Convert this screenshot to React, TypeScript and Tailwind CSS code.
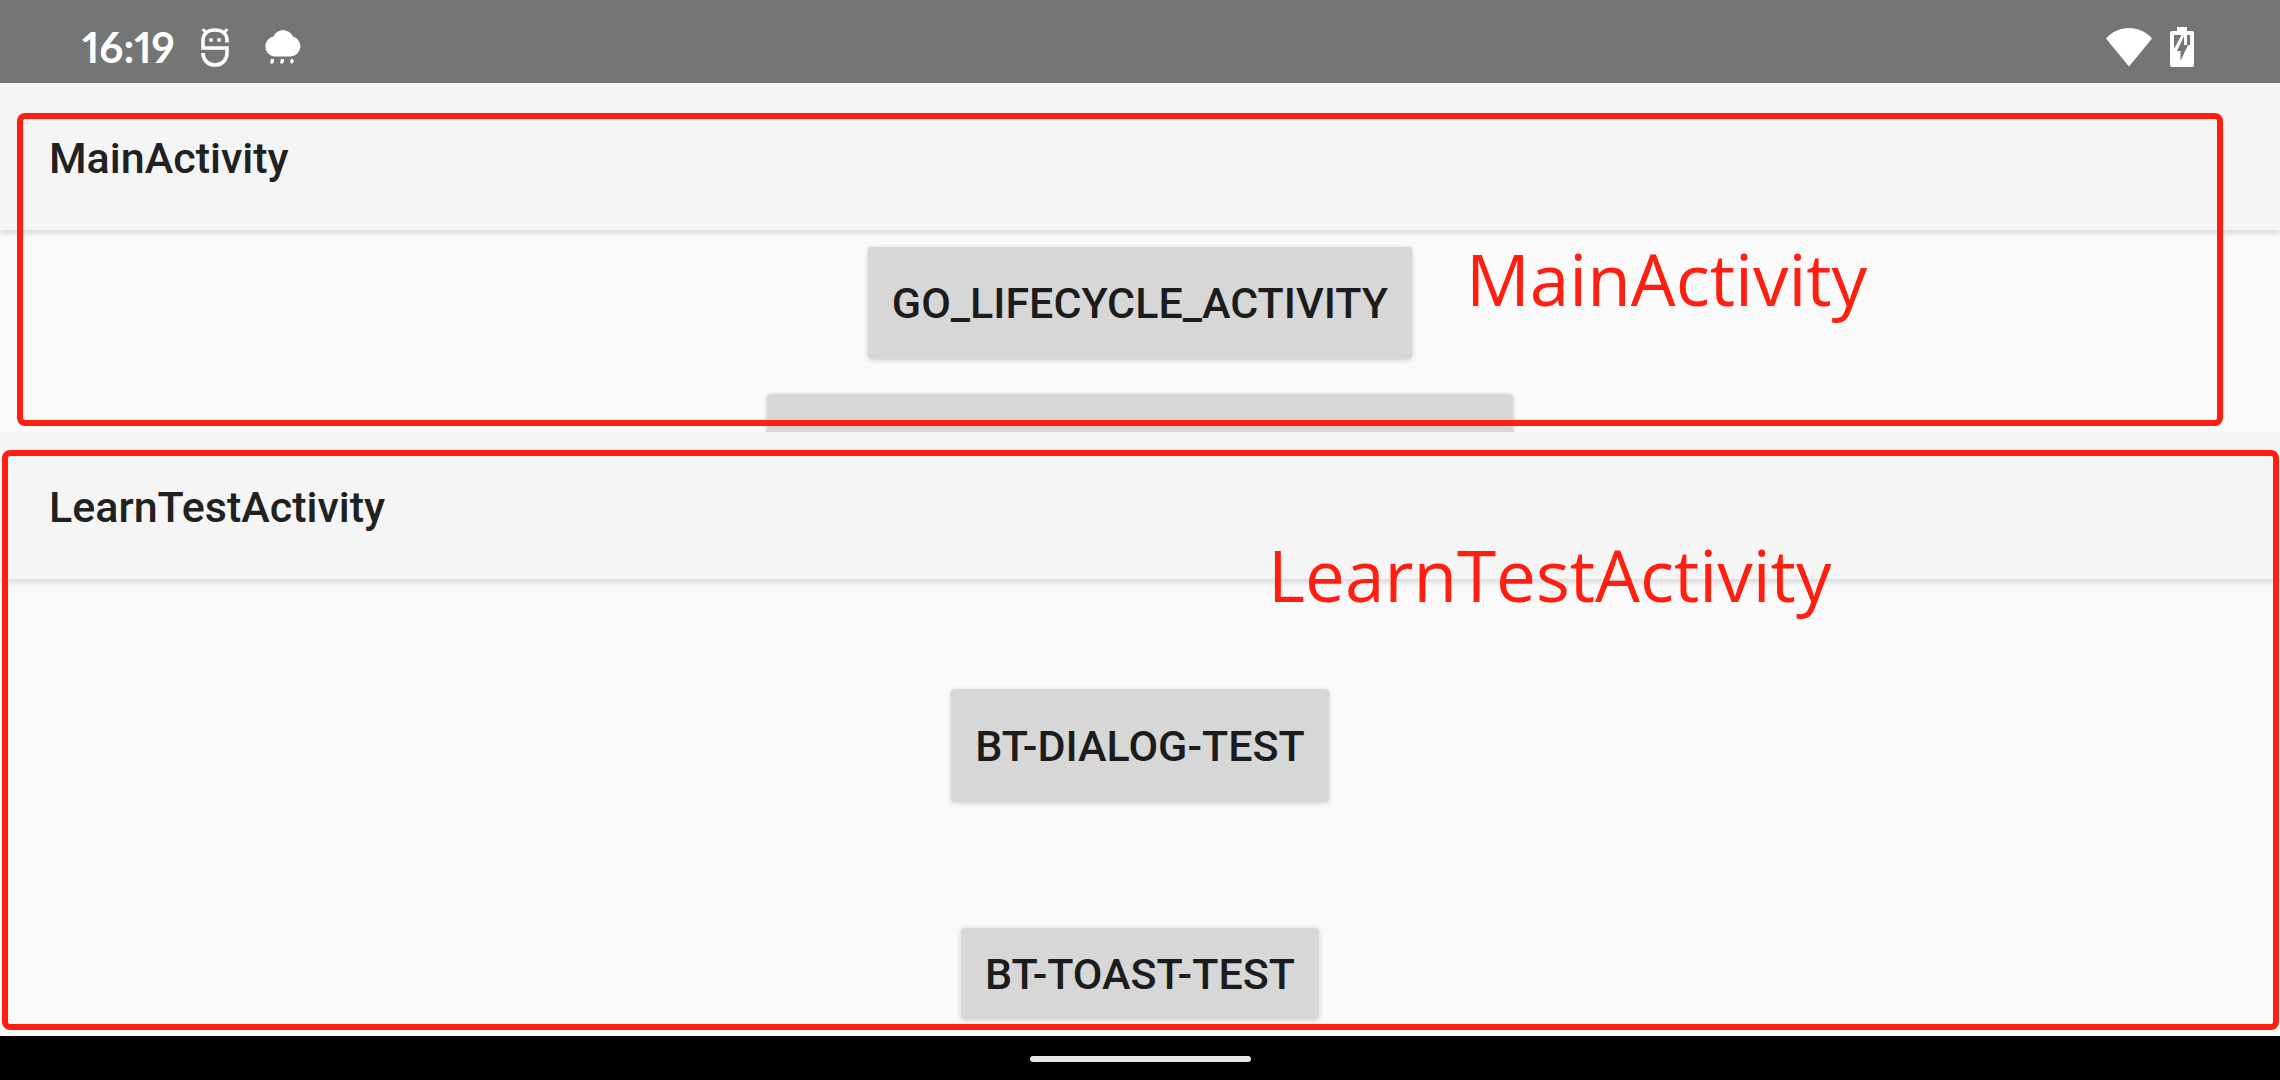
import React from "react";

const boxClass = "pointer-events-none absolute rounded-lg border-6 border-[#ff1e10]";
const labelClass =
  "pointer-events-none absolute font-['Open_Sans',sans-serif] text-[71px] leading-[98px] text-[#ff1e10]";
const buttonClass =
  "shrink-0 rounded-[4px] bg-[#d7d7d7] px-6 text-[43px] leading-[50px] font-medium text-[#1c1c1c] shadow-[0_1px_5px_rgba(0,0,0,0.2)]";

function RobotIcon() {
  return (
    <svg className="h-10 w-7" viewBox="0 0 28 40" fill="none" stroke="#fff" strokeWidth="3.6">
      <path d="M26 15.500v-2C26 7 21.500 3 14 3S2 7 2 13.500V21h24v5c0 7-5 12-12 12S2 33 2 26" />
      <path d="M2.500 3l3 3M25.500 3l-3 3" strokeLinecap="round" strokeWidth="3" />
      <circle cx="10" cy="13" r="2" fill="#fff" stroke="none" />
      <circle cx="18" cy="13" r="2" fill="#fff" stroke="none" />
    </svg>
  );
}

function RainIcon() {
  return (
    <svg className="h-9 w-[38px]" viewBox="0 0 38 36" fill="#fff">
      <path d="M10.500 7.500C14-1 26-1 30 7.500A10.200 10.200 0 0 1 27.500 27.500H10.500A10.200 10.200 0 0 1 10.500 7.500z" />
      <path d="M8 30h3v3l-2 2-2-1zM18 30h3v3l-2 2-2-1zM28 30h2l1 2-2 3-2-2z" />
    </svg>
  );
}

function WifiIcon() {
  return (
    <svg className="h-10 w-[46px]" viewBox="0 0 46 40" fill="#fff">
      <path d="M0 11.500C12-2.500 34-2.500 46 11.500L23 39.500z" />
    </svg>
  );
}

function BatteryIcon() {
  return (
    <svg className="h-10 w-6" viewBox="0 0 24 40">
      <path fill="#fff" d="M7 0h10v4h5a2 2 0 0 1 2 2v32a2 2 0 0 1-2 2H2a2 2 0 0 1-2-2V6a2 2 0 0 1 2-2h5z" />
      <path fill="#757575" d="M4 8h7.500L4 22zM14 9v9h4L10.500 34V24H7zM17 8h3v10h-3z" />
    </svg>
  );
}

function AppBar({ title }: { title: string }) {
  return (
    <header className="relative h-[147px] shrink-0 bg-[#f5f5f5] px-[49px] pt-[50px] shadow-[0_4px_5px_rgba(0,0,0,0.12)]">
      <h1 className="text-[43px] leading-[50px] font-medium text-[#212121]">{title}</h1>
    </header>
  );
}

export default function App() {
  return (
    <div className="flex min-h-screen flex-col bg-[#fafafa] font-['Roboto',sans-serif]">
      <div className="flex h-[83px] shrink-0 items-center justify-between bg-[#757575] pr-[86px] pl-[82px] pt-2.5">
        <div className="flex items-center">
          <time className="font-['Lato',sans-serif] text-[42px] leading-[50px] font-bold text-white proportional-nums">16:19</time>
          <span className="ml-[26px]"><RobotIcon /></span>
          <span className="ml-[34px]"><RainIcon /></span>
        </div>
        <div className="flex items-center gap-[18px]">
          <WifiIcon />
          <BatteryIcon />
        </div>
      </div>

      <section className="relative flex h-[349px] shrink-0 flex-col">
        <AppBar title="MainActivity" />
        <div className="flex min-h-0 flex-1 flex-col items-center gap-[35px] overflow-hidden pt-[17px]">
          <button type="button" className={`${buttonClass} h-[112px]`}>GO_LIFECYCLE_ACTIVITY</button>
          <button type="button" aria-label="More" className={`${buttonClass} h-[112px] w-[746px]`} />
        </div>
        <div className={`${boxClass} top-[30px] right-[57px] bottom-[6px] left-[17px]`} />
        <p className={`${labelClass} top-[147px] left-[1466px]`}>MainActivity</p>
      </section>

      <section className="relative flex flex-1 flex-col">
        <AppBar title="LearnTestActivity" />
        <div className="flex flex-col items-center gap-[126px] pt-[110px]">
          <button type="button" className={`${buttonClass} h-[113px]`}>BT-DIALOG-TEST</button>
          <button type="button" className={`${buttonClass} h-[91px]`}>BT-TOAST-TEST</button>
        </div>
        <div className={`${boxClass} top-[18px] right-px bottom-[6px] left-[2px]`} />
        <p className={`${labelClass} top-[94px] left-[1268px]`}>LearnTestActivity</p>
      </section>

      <nav className="flex h-11 shrink-0 items-start justify-center bg-black pt-5">
        <div className="h-[6px] w-[221px] rounded-full bg-[#e8e8e8]" />
      </nav>
    </div>
  );
}
